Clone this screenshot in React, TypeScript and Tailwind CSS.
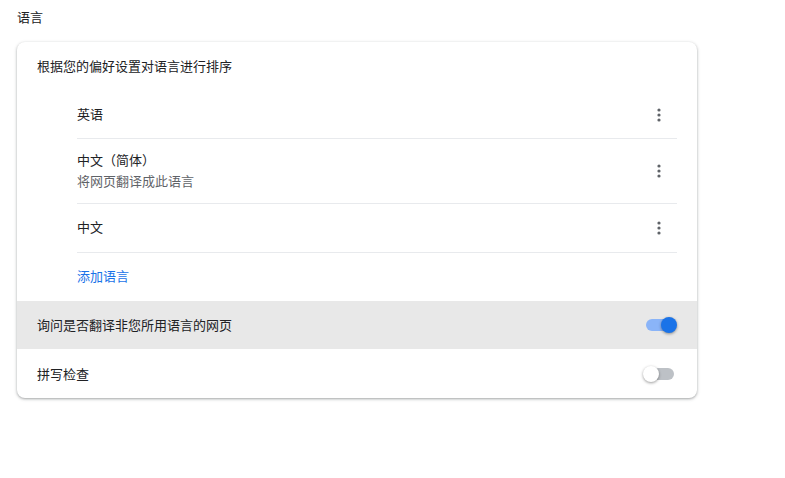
import React from 'react';

const font = { fontFamily: '"Noto Sans CJK SC", Roboto, "Noto Sans", sans-serif' };

const Dots = () => (
  <button className="flex h-8 w-8 items-center justify-center">
    <svg width="4" height="14" viewBox="0 0 4 14" fill="#5f6368">
      <circle cx="2" cy="2" r="1.6" />
      <circle cx="2" cy="7" r="1.6" />
      <circle cx="2" cy="12" r="1.6" />
    </svg>
  </button>
);

const Toggle = ({ on }: { on: boolean }) => (
  <div className="relative h-4 w-[34px]">
    <div
      className={`absolute left-[3px] top-[2px] h-3 w-[28px] rounded-full ${
        on ? 'bg-[#8ab4f8]' : 'bg-[#bdc1c6]'
      }`}
    />
    <div
      className={`absolute top-0 h-4 w-4 rounded-full shadow-[0_1px_3px_rgba(0,0,0,0.4)] ${
        on ? 'left-[18px] bg-[#1a73e8]' : 'left-0 bg-white'
      }`}
    />
  </div>
);

const langs = [
  { name: '英语', h: 'h-[48px]' },
  { name: '中文（简体）', sub: '将网页翻译成此语言', h: 'h-[65px]' },
  { name: '中文', h: 'h-[49px]' },
];

export default function App() {
  return (
    <div className="min-h-screen bg-white text-[13px] text-[#202124]" style={font}>
      <div className="px-[17px] pt-[7px]">
        <div className="h-[35px] leading-5">语言</div>
        <div className="w-[680px] overflow-hidden rounded-lg bg-white shadow-[0_1px_2px_rgba(60,64,67,0.3),0_1px_3px_1px_rgba(60,64,67,0.15)]">
          <div className="flex h-[49px] items-center pb-[2px] px-5">根据您的偏好设置对语言进行排序</div>
          <div className="pl-[60px] pr-5">
            {langs.map((l) => (
              <div
                key={l.name}
                className={`flex items-center justify-between border-b border-[#e8eaed] ${l.h}`}
              >
                <div className="pb-[2px]">
                  <div className="leading-[22px]">{l.name}</div>
                  {l.sub && <div className="leading-5 text-[#5f6368]">{l.sub}</div>}
                </div>
                <div className="mr-[2px]">
                  <Dots />
                </div>
              </div>
            ))}
            <div className="flex h-[48px] items-center pb-[2px] text-[#1a73e8]">添加语言</div>
          </div>
          <div className="flex h-[48px] items-center justify-between bg-[#e8e8e8] pl-5 pr-5">
            <span>询问是否翻译非您所用语言的网页</span>
            <Toggle on />
          </div>
          <div className="flex h-[49px] items-center justify-between pl-5 pr-5">
            <span>拼写检查</span>
            <Toggle on={false} />
          </div>
        </div>
      </div>
    </div>
  );
}
